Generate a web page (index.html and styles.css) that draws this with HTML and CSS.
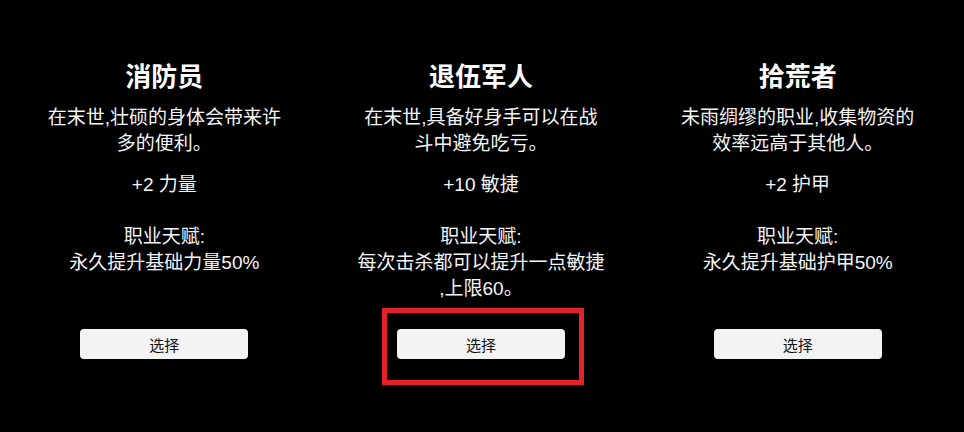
FILE: index.html
```html
<!DOCTYPE html>
<html lang="zh-CN">
<head>
<meta charset="utf-8">
<title>职业选择</title>
<link rel="stylesheet" href="styles.css">
</head>
<body>
<main class="cards">
  <section class="card">
    <h2 class="title">消防员</h2>
    <p class="desc">在末世,壮硕的身体会带来许多的便利。</p>
    <p class="stat">+2 力量</p>
    <p class="talent">职业天赋:<br>永久提升基础力量50%</p>
    <div class="actions"><button class="choose">选择</button></div>
  </section>
  <section class="card">
    <h2 class="title">退伍军人</h2>
    <p class="desc">在末世,具备好身手可以在战斗中避免吃亏。</p>
    <p class="stat">+10 敏捷</p>
    <p class="talent">职业天赋:<br>每次击杀都可以提升一点敏捷<br>,上限60。</p>
    <div class="actions">
      <div class="btn-wrap">
        <button class="choose">选择</button>
        <span class="highlight"></span>
      </div>
    </div>
  </section>
  <section class="card">
    <h2 class="title">拾荒者</h2>
    <p class="desc">未雨绸缪的职业,收集物资的效率远高于其他人。</p>
    <p class="stat">+2 护甲</p>
    <p class="talent">职业天赋:<br>永久提升基础护甲50%</p>
    <div class="actions"><button class="choose">选择</button></div>
  </section>
</main>
</body>
</html>
```

FILE: styles.css
```css
html, body {
  margin: 0;
  background: #000;
}

body {
  width: 964px;
  height: 432px;
  overflow: hidden;
  color: #f5f5f5;
  font-family: "Liberation Sans", "Noto Sans CJK SC", sans-serif;
}

.cards {
  display: grid;
  grid-template-columns: repeat(3, 1fr);
  width: 950px;
  margin-left: 6px;
  padding-top: 60px;
}

.card {
  display: flex;
  flex-direction: column;
  align-items: center;
  padding: 0 33px;
  text-align: center;
}

.title {
  margin: 0 0 11px;
  font-size: 26px;
  line-height: 34px;
  font-weight: 700;
  color: #fff;
}

.desc,
.stat,
.talent {
  width: 250px;
  margin: 0;
  font-size: 19px;
  line-height: 26px;
}

.stat {
  margin: 15px 0 26px;
}

.actions {
  margin-top: auto;
  padding-top: 27px;
}

.btn-wrap {
  position: relative;
}

.choose {
  display: block;
  width: 168px;
  height: 30px;
  padding: 0;
  border: none;
  border-radius: 4px;
  background: #f3f3f3;
  color: #111;
  font-family: "Liberation Sans", "Noto Sans CJK SC", sans-serif;
  font-size: 15px;
}

.highlight {
  position: absolute;
  left: -15px;
  top: -21px;
  width: 192px;
  height: 67px;
  border: 5px solid #e3212b;
  pointer-events: none;
}
```
